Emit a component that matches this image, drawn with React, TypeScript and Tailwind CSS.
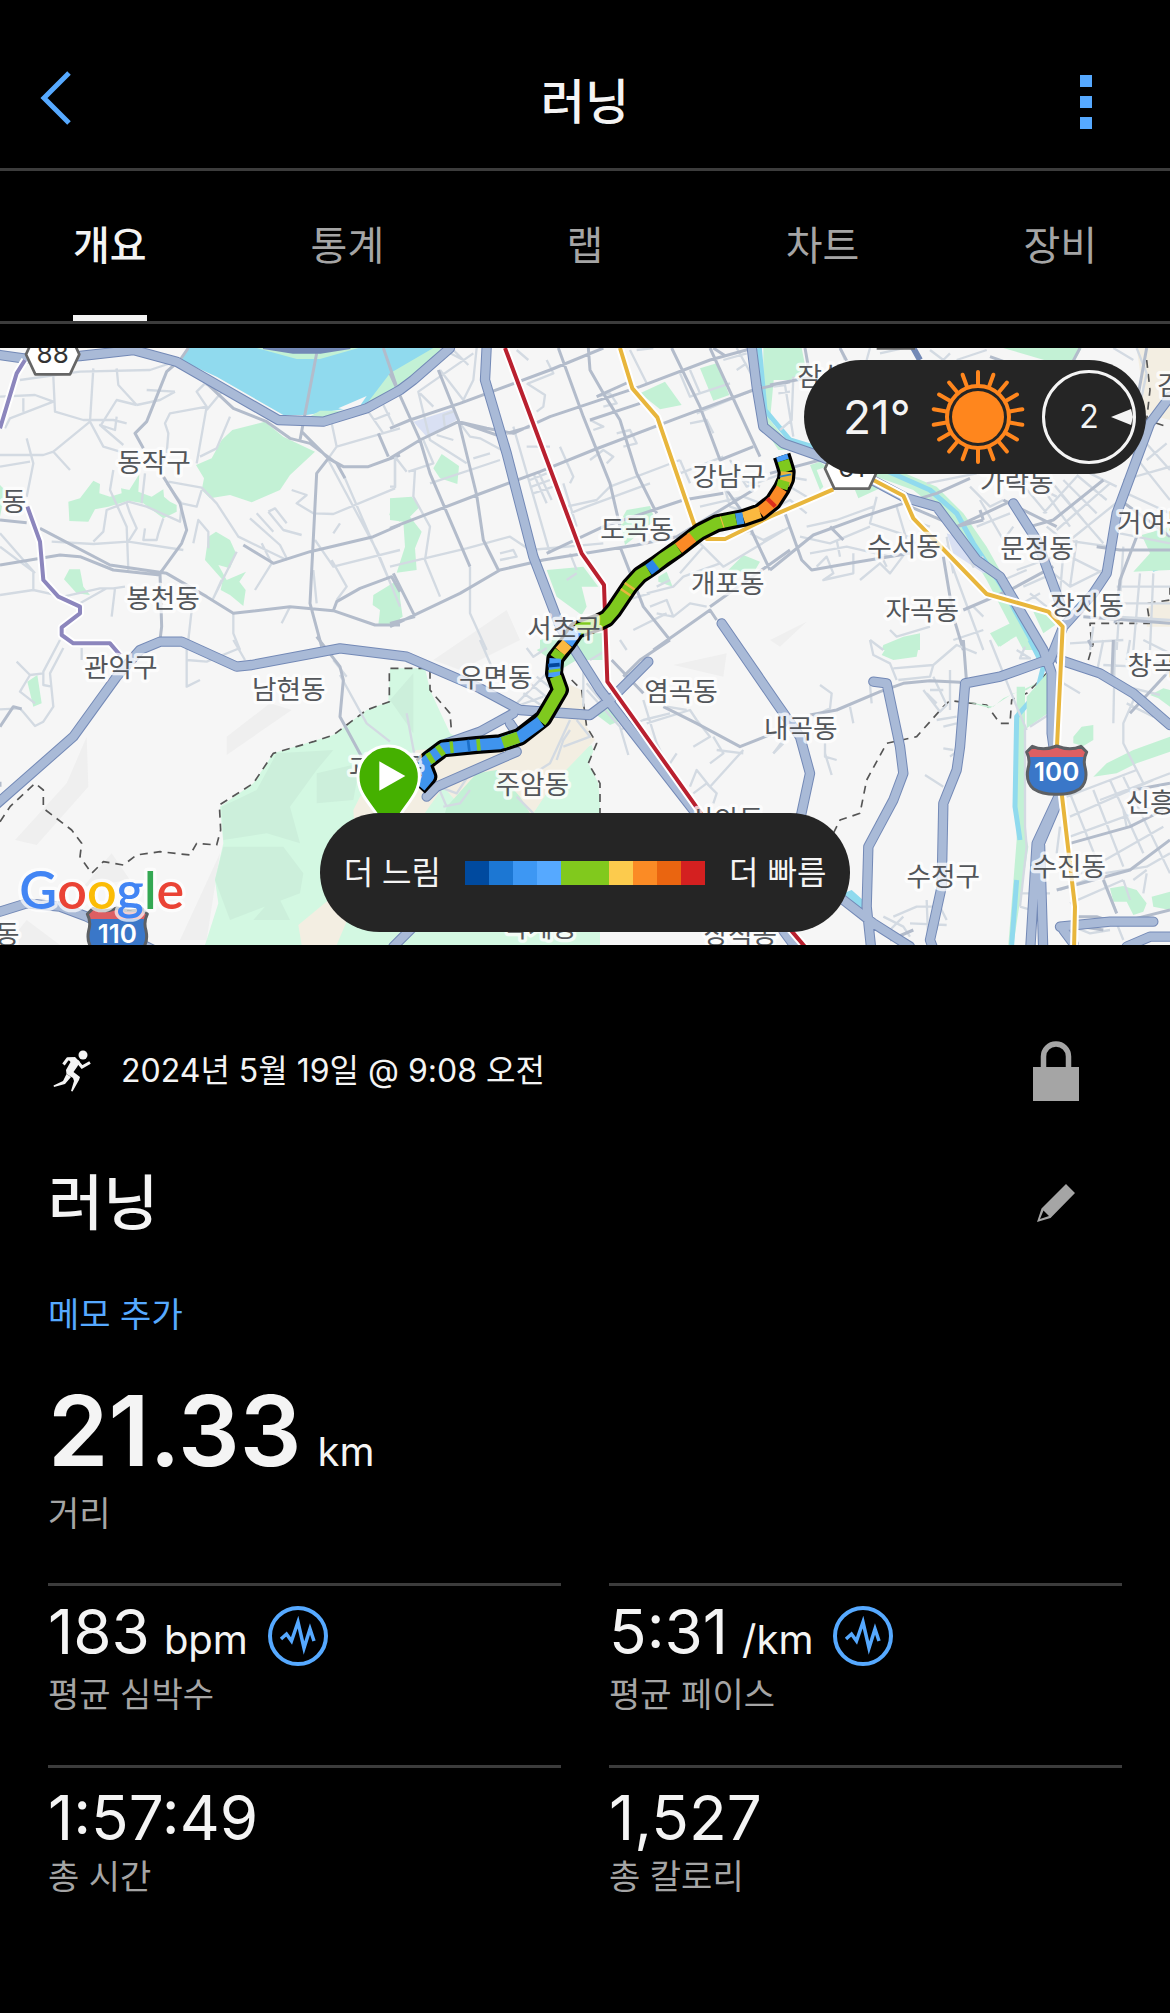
import type { ReactNode } from "react";

// Map units are a third of a pixel. Streets and parks are stored per tile.
type Tile = { x: number; y: number; parks: string[]; small: string; medium: string };

const tiles: Tile[] = [
  {
    x: 0,
    y: 0,
    parks: [
      "M697 270L795 245L850 290L945 335L870 405L840 450L755 487L690 465L630 475L605 450L612 415L588 375L635 355L665 300Z",
      "M205 485L240 475L280 422L300 432L298 460L330 470L365 460L363 445L388 450L418 402L415 455L455 470L490 448L492 470L510 485L530 495L530 515L490 535L430 490L385 482L325 500L285 508L265 545L208 543Z",
      "M625 590L648 575L690 600L708 640L690 685L655 675L680 720L738 695L718 725L737 750L730 798L690 765L662 750L668 720L615 660Z",
      "M192 718L208 688L240 688L250 740L270 765L230 760Z",
      "M1120 765L1180 728L1200 735L1200 850L1135 855L1140 810L1118 795Z",
      "M1180 475L1200 475L1200 545L1168 525Z",
      "M0 435L15 450L0 530Z",
    ],
    small:
      "M60 120L240 95L450 90L540 60M280 85L270 245M160 110L165 215L250 240L340 240L380 250M350 85L355 135L410 195M0 170L105 165L160 185L30 235L15 265M70 175L70 215M270 245L160 335L130 345L0 345M160 335L210 390M80 295L100 370L80 470M0 380L90 365M340 390L330 450L380 560L385 690M590 370L620 200L510 220L495 250L505 280L500 340L480 390M440 150L525 155M410 195L480 180L525 155M690 230L650 325L600 350M505 425L605 443L650 490L715 590L860 660M500 430L545 490L590 500L605 450M280 605L310 575L320 510L385 485L440 500L540 545L545 490M155 605L280 612L385 605L550 630M385 605L410 565L390 520L380 490M435 565L430 600L470 600L475 580L490 535M580 610L595 540L625 575L625 625M435 400L425 490M300 260L350 180L410 195M350 230L345 270L300 255L370 315M270 245L310 320L360 335M620 200L590 155L615 130M610 130L670 150L620 210M875 450L920 465L890 490L940 520L1000 522L1185 445M750 535L840 615L860 655M770 520L820 575M805 515L850 570L905 585M805 515L825 505L860 550M785 610L815 670L765 750M985 360L1135 640L1200 800M1035 415L1180 750M995 250L1010 320L985 355M1010 320L1200 265M1105 215L1150 280M1150 195L1180 255M1120 240L1170 220M1185 345L1185 445M995 660L1040 740L1010 780M1000 580L1020 550M945 600L1000 680L1200 630M0 580L105 700M0 620L100 695L100 750L0 765M100 750L190 770L300 745L340 745L375 740M240 790L320 745M345 745L335 830M575 810L565 900M700 820L700 880L720 930M870 800L845 850M665 720L640 775L710 635M940 690L950 790",
    medium:
      "M950 40L900 300M1150 24L1190 140M565 24L540 60L500 95L440 245L405 280L430 325M490 410L540 490L560 570L545 610L480 700L485 860L480 900M120 565L330 675L500 700L620 770L700 820L870 800L1000 812L1125 855L1200 855M0 675L180 645L240 650L340 690L480 705M0 540L80 548M905 275L985 355L950 400L930 790L965 920M985 355L1030 380L1105 380L1200 345M730 615L820 670L930 635L1120 590L1200 555M620 130L700 205L800 245L870 295L930 310L1010 370L1035 415M1135 280L1165 350M1000 812L1010 785L1080 745L1175 710L1200 755",
  },
  {
    x: 1170,
    y: 0,
    parks: [
      "M750 160L825 125L875 195L810 208Z",
      "M930 85L980 70L1018 165L970 182Z",
      "M130 385L155 342L207 378L202 432L150 415Z",
      "M0 475L65 470L90 500L60 530L95 575L75 625L80 690L20 698L45 620L40 545L0 540Z",
      "M0 735L25 740L38 830L0 855Z",
      "M470 690L580 680L625 740L575 740L590 800L575 825L500 770Z",
      "M690 545L710 510L780 498L795 540L750 580L705 615Z",
      "M1015 690L1060 645L1110 665L1090 700Z",
      "M805 710L830 695L848 740L805 725Z",
      "M450 900L560 870L640 880L640 935L450 930Z",
    ],
    small:
      "M185 25L235 75M260 24L250 120L220 180L150 90M250 40L85 155L120 300L230 370M150 24L220 60M90 160L130 200M0 440L15 440L15 350L50 395M55 395L130 370L100 300M75 390L70 470L120 560L105 660L150 770M0 680L230 625L360 590L420 630L640 610M165 265L160 225L190 215M140 285L190 300M210 250L240 290L270 295L335 330L335 250M300 340L250 355M330 360L120 430M370 260L480 640M410 320L480 320M430 400L470 490M445 395L485 480M420 420L470 400M425 440L480 420M430 460L490 440M510 320L550 410L540 430M410 130L465 165L460 200L440 215M415 130L490 100L470 60M380 30L415 60M600 240L640 260L610 270M530 500L620 480L660 440L870 360M520 430L560 560M540 520L590 500L780 430M600 360L640 330L670 350L650 370M620 170L660 160L680 190L640 200M680 280L720 270L740 310L700 320M740 30L790 24M720 30L770 130M870 360L900 430M900 90L930 160M900 250L950 240L970 280M870 100L900 170L1020 130M920 220L1090 150M840 330L870 400L1000 350M1040 24L1110 150M1000 60L1070 40M1070 70L1040 90M1020 360L1070 440L1180 400M1060 420L1110 440M930 500L1060 470L1140 500M1000 430L1020 500L1080 520M930 610L1000 680L1200 560M770 760L850 740L880 710L990 670M800 740L840 720M780 800L830 780L850 830L800 820M850 830L900 790L950 800M1080 580L1120 600L1180 570M1010 590L1090 570M640 800L780 760M730 870L830 820M540 640L560 690M240 680L240 820L290 930M330 640L370 630L380 650L330 660M530 720L560 700M940 620L870 700",
    medium:
      "M0 100L90 300L120 400L240 680M145 90L205 240L260 465L280 600L325 690M0 265L60 240L210 190L480 90L640 24M0 355L90 300L205 245L290 265L370 280L480 230L750 140L960 60L1090 24M205 245L320 285M0 565L260 465L450 395L610 330L860 235L1090 150L1200 125M350 280L420 260M470 640L640 560L880 480L1000 460M0 860L210 760L330 690L460 660L740 615L860 590L1090 450M505 24L580 230L660 430L690 560M595 24L600 90L640 160L690 240L740 400L800 520M600 240L750 190M845 24L930 200L990 360L1090 320M960 24L1110 350M690 620L760 800L840 900M960 800L1200 630M790 930L960 810L980 840M1010 450L1060 520L1140 690M10 700L75 830M0 850L75 830M730 120L620 170M970 24L1010 50",
  },
  {
    x: 2310,
    y: 0,
    parks: [
      "M0 24L95 24L108 90L60 120L0 120Z",
      "M700 24L935 24L915 62L830 62Z",
      "M120 375L150 365L170 380L140 390L160 440L150 450Z",
      "M255 450L310 420L330 445L265 475Z",
      "M660 880L730 845L745 885L685 920Z",
      "M790 815L850 820L870 845L820 880Z",
      "M340 915L400 890L450 880L450 930L335 930Z",
      "M1115 585L1200 560L1200 690L1090 695L1140 640Z",
    ],
    small:
      "M10 140L45 135L70 290M70 110L65 240L30 270M25 160L60 155M210 24L225 60M300 24L290 60M330 40L400 24M480 30L520 60L540 40M560 60L650 30M20 500L60 480L110 520M60 440L110 470L90 500M50 410L110 420M110 560L200 540L310 500M90 590L180 610L300 560M120 640L230 620L360 650L410 640M140 680L170 650L190 700L160 720L250 700L250 640M270 720L330 670L360 700L405 640M200 600L210 650M320 470L300 550L420 590M380 500L410 600M350 680L330 640M430 600L450 640L530 620M420 540L480 560M530 590L550 700M540 660L640 930M470 430L620 400M480 470L500 500M600 440L660 500L700 480M620 560L720 520M630 480L700 600L730 560M700 420L760 440M730 400L830 520M760 420L860 470M800 420L900 560M840 420L940 540M880 420L980 520M920 405L1010 480M960 400L1040 440M820 520L920 410M860 570L1020 430M900 600L1050 480M870 460L1000 610M830 560L880 600L1020 620L1030 660M740 690L880 640L1000 700M760 740L850 700L900 740L1000 690M880 640L870 760M920 600L900 740M780 760L830 800M740 800L810 760M1060 620L1040 930M1110 700L1090 930M1150 700L1140 930M1040 740L1200 740M1040 790L1200 790M1040 830L1200 840M970 860L960 930M900 910L1060 900M1050 580L1200 610M1080 330L1200 480M1120 300L1200 390M1060 420L1200 380M1130 360L1190 310M1070 460L1200 520M1100 24L1130 100L1100 240M1030 24L1090 60M300 900L340 930M360 870L380 890L480 860M550 900L640 870M610 800L640 830M670 700L700 720L770 690M570 590L610 680L640 650",
    medium:
      "M0 135L130 110M105 24L115 80M210 24L230 62M0 400L150 360M0 690L130 585L280 530L400 490L500 460L600 415M45 520L95 660L125 690L240 670L420 640M180 560L220 600M420 500L560 560L730 480M520 650L550 830L580 930M580 810L720 750L850 680M630 510L640 540M560 560L640 540M1130 24L1100 190M1000 420L850 540L780 560M700 480L860 560M1200 590L1160 560L1050 480M1100 590L1050 720L1035 850M940 830L1200 850M660 50L830 110M930 24L910 62M980 620L1050 630L1200 630",
  },
  {
    x: 0,
    y: 900,
    parks: ["M82 125L112 105L125 190L100 200Z", "M75 500L120 490"],
    small:
      "M50 65L90 105L60 155L105 190M90 105L130 100M180 0L130 95L130 135L155 140M190 24L150 100L160 200L130 245L105 258L60 205L0 208M560 0L560 140L600 120M560 60L620 65L720 24M700 0L735 60M1000 60L1040 110M1020 105L1100 250L1170 305M245 24L245 60",
    medium: "M0 260L40 200L65 207M950 -10L1020 80L1030 120L1020 230L1085 350M0 425L0 440",
  },
  {
    x: 1170,
    y: 900,
    parks: [
      "M440 30L500 0L640 0L640 60L560 60L510 90L470 50Z",
      "M620 225L680 190L695 240L660 255Z",
      "M380 200L440 200L435 225L370 215Z",
      "M170 500L260 400L320 390L390 470L420 520L165 520Z",
    ],
    small:
      "M270 0L305 80M410 24L430 50L470 24M380 190L470 100M400 160L460 200M390 195L460 170M420 130L480 180M440 110L490 150M590 150L690 260L715 345M690 270L760 240L840 220M580 60L580 200M760 180L800 310L870 450L920 540M770 250L900 210L920 240L960 290L910 320M860 340L840 370M900 440L920 390L960 440L1060 330M910 460L950 430L980 460L970 490M980 330L1060 340M970 290L1000 340L960 370M540 240L480 370L440 395M560 240L600 290L520 320M540 270L520 300L500 360M50 220L80 380L60 400M380 470L430 520M120 430L200 460L240 400M160 500L210 490L240 450M690 0L710 30M1150 340L1180 300M590 130L640 190M830 200L890 210M600 60L650 30M140 430L170 500",
    medium: "M665 60L760 160M700 110L750 60L840 0M820 200L920 250L1050 320L1150 280",
  },
  {
    x: 2310,
    y: 900,
    parks: [
      "M335 45L350 20L400 5L450 0L440 50L370 60Z",
      "M680 0L720 0L690 20Z",
      "M770 170L835 95L840 215L770 265Z",
      "M910 290L935 260L970 255L970 300L940 318L910 310Z",
      "M970 410L1010 370L1090 330L1200 290L1200 335L1100 370L1040 400Z",
      "M1140 165L1180 145L1200 150L1200 200L1165 175Z",
      "M1020 745L1060 738L1100 750L1130 790L1120 815L1090 825L1070 785L1030 785Z",
      "M1145 770L1200 755L1200 810L1150 800Z",
      "M590 185L660 205L730 160L770 150L800 130L700 175L670 200Z",
    ],
    small:
      "M300 0L310 45L360 70L380 120M370 85L490 75L560 15L620 40M490 75L480 110L385 120M660 0L740 200L770 270M780 260L850 215M765 265L765 560L770 620L750 800M150 135L185 160L180 205L130 230M240 200L250 250M300 135L305 190M460 150L510 215L530 195L490 110M480 150L520 150M470 160L500 190M500 240L560 230M520 260L560 250M520 325L550 330M540 350L560 335M465 405L520 440M165 310L165 350L200 360M165 340L185 405M10 340L40 310M740 30L780 55L750 55L765 20M880 130L930 160M1000 0L980 100M1035 0L1030 250M1080 0L1070 60M1120 0L1200 40M1000 75L1100 80L1200 60M1030 130L1170 165M1095 170L1060 250L1060 310L1120 430M1150 230L1070 190M900 530L1150 420M890 470L1100 390M900 460L980 660L1040 820M970 450L1060 680M1020 420L1120 640M1060 410L1200 700M900 590L1200 480M900 720L1180 560M1060 510L1070 560M990 480L1200 400M870 750L1000 700L1130 680L1200 640M900 790L1060 720M1060 720L1080 780M1130 700L1120 760M1090 720L1130 690M750 760L840 760M750 800L800 815M370 830L440 800L510 800L530 840M420 850L530 855M470 780L475 910M340 830L400 860L420 890M330 860L430 910M360 870L400 830M510 800L500 870M910 860L960 880L1020 870M1040 850L1060 900M870 560L860 640M800 620L780 740M540 90L540 210",
    medium:
      "M120 225L200 210L330 155L400 130L480 122L570 127M580 0L590 130M955 0L965 20M1030 0L1025 130M1080 220L1200 90M900 610L1080 560L1180 510M860 750L970 720L1080 690L1200 600M1000 720L1040 820M920 830L980 830L1040 850L1200 810M870 850L1000 870M1090 450L1200 430M360 900L430 870",
  },
];

const highways =
  "M0 45L70 55L240 48L400 30L530 65L835 240L970 245L1100 205L1200 150L1240 120L1350 24M-10 1392L220 1190L350 1010L420 930L480 905L545 905L710 980L755 975L1020 925L1220 950L1440 1045L1560 1110L1770 1125L1830 1080L1945 965M1460 20L1455 120L1520 340L1600 650L1680 860L1800 1050L2080 1410L2260 1650L2400 1840M2255 20L2270 140L2290 260L2350 310L2450 345L2560 390L2720 475L2810 500L2930 660L3000 710L3130 930L3155 1000L3155 1180L3180 1360L3110 1510L3090 1840M2165 850L2330 1090L2400 1190L2430 1300L2400 1440M2620 1025L2660 1030L2700 1220L2710 1300L2680 1380L2605 1520L2600 1700L2615 1840M2895 1035L2880 1220L2870 1290L2830 1390L2825 1640L2790 1800L2805 1840M2895 1030L3000 1010L3140 960M3510 170L3450 250L3350 520L3320 700L3280 760L3190 860L3150 960M3180 960L3300 1000L3400 1060L3510 1155M3040 490L3110 600L3180 790M3180 1370L3120 1510L3130 1840M2530 1680L2620 1750L2730 1820M3180 1760L3330 1745L3460 1745M3380 1820L3450 1790L3520 1790M1280 1370L1310 1340L1550 1235M1340 1210L1440 1175L1540 1120M1530 1150L1550 1180L1530 1230M0 1715L80 1690L180 1700L260 1730L460 1830M1180 1820L1260 1740M3190 1770L3220 1810";

const route: [string, string][] = [
  ["#4a9df8", "M2345 347L2350 362"],
  ["#7fc91e", "M2350 362L2360 395"],
  ["#e9b63c", "M2360 395L2358 418L2351 434"],
  ["#2c83c9", "M2356 404L2357 409M2351 428L2349 434"],
  ["#7fc91e", "M2352 422L2345 446"],
  ["#fb8a26", "M2345 446L2320 485L2280 517"],
  ["#dc2d1c", "M2318 483L2309 492"],
  ["#fbb940", "M2280 517L2230 534"],
  ["#3e95e8", "M2230 534L2208 538"],
  ["#7fc91e", "M2208 538L2150 550L2100 575L2072 595"],
  ["#fbb940", "M2165 547L2168 546"],
  ["#fb8a26", "M2078 591L2035 625"],
  ["#7fc91e", "M2035 625L1990 655L1965 675"],
  ["#2c86e6", "M1968 673L1945 690"],
  ["#7fc91e", "M1945 690L1920 705L1890 738L1840 812L1820 835L1800 845L1730 870"],
  ["#e9b63c", "M1891 736L1887 742M1879 754L1875 760"],
  ["#4a9df8", "M1730 870L1702 910"],
  ["#fbb940", "M1702 910L1680 935"],
  ["#7fc91e", "M1680 935L1666 955"],
  ["#4a9df8", "M1666 955L1662 1012"],
  ["#02469b", "M1661 970L1662 981"],
  ["#7fc91e", "M1663 988L1664 996M1666 1010L1680 1050L1630 1135L1622 1145"],
  ["#3f94ee", "M1622 1145L1560 1190L1500 1210L1430 1215L1330 1225L1290 1255L1270 1272L1285 1310L1260 1340"],
  ["#7fc91e", "M1555 1192L1508 1208M1441 1214L1430 1215M1360 1221L1350 1222M1328 1227L1315 1236M1298 1250L1285 1258"],
  ["#1b6fc9", "M1410 1216L1402 1217"],
];

const routeLine =
  "M2345 347L2350 362L2360 395L2358 418L2345 446L2320 485L2280 517L2230 534L2150 550L2100 575L2035 625L1965 675L1920 705L1890 738L1840 812L1820 835L1800 845L1730 870L1702 910L1666 955L1662 1000L1680 1050L1630 1135L1560 1190L1500 1210L1430 1215L1330 1225L1290 1255L1270 1272L1285 1310L1255 1342";

const places: [string, number, number][] = [
  ["동작구", 462, 396],
  ["동", 42, 514],
  ["봉천동", 489, 804],
  ["관악구", 362, 1011],
  ["남현동", 866, 1076],
  ["동", 22, 1812],
  ["강남구", 2187, 438],
  ["도곡동", 1911, 596],
  ["개포동", 2183, 759],
  ["서초구", 1692, 894],
  ["우면동", 1487, 1040],
  ["염곡동", 2043, 1082],
  ["주암동", 1597, 1362],
  ["내곡동", 2402, 1194],
  ["사안동", 2180, 1468],
  ["과천동", 1157, 1312],
  ["막계동", 1621, 1790],
  ["상적동", 2221, 1812],
  ["잠실동", 2503, 139],
  ["가락동", 3050, 456],
  ["거여동", 3461, 576],
  ["수서동", 2712, 649],
  ["문정동", 3111, 654],
  ["자곡동", 2767, 840],
  ["장지동", 3261, 824],
  ["김이동", 3581, 166],
  ["창곡동", 3493, 1004],
  ["신흥동", 3487, 1416],
  ["수진동", 3208, 1608],
  ["수정구", 2830, 1638],
];

const paceColors = [
  "bg-[#004a9f]",
  "bg-[#1c77d3]",
  "bg-[#3d97f3]",
  "bg-[#56a9ff]",
  "bg-[#81c91d]",
  "bg-[#81c91d]",
  "bg-[#fccb4d]",
  "bg-[#fb8b25]",
  "bg-[#ea6510]",
  "bg-[#d42020]",
];

const tabs = ["개요", "통계", "랩", "차트", "장비"];

const stats = [
  { value: "183", unit: "bpm", label: "평균 심박수", chart: true },
  { value: "5:31", unit: "/km", label: "평균 페이스", chart: true },
  { value: "1:57:49", unit: "", label: "총 시간", chart: false },
  { value: "1,527", unit: "", label: "총 칼로리", chart: false },
];

function Shield({ x, y, label }: { x: number; y: number; label: string }) {
  const outline = "M8 22L25 5Q58 20 98 4Q138 20 171 5L188 22Q176 45 184 72Q192 110 168 132Q140 150 98 149Q56 150 28 132Q4 110 12 72Q20 45 8 22Z";
  return (
    <g transform={`translate(${x} ${y})`}>
      <path d={outline} fill="#3a77c8" />
      <path d="M8 22L25 5Q58 20 98 4Q138 20 171 5L188 22L180 37H16Z" fill="#dd5f63" />
      <path d={outline} fill="none" stroke="#5d6064" strokeWidth="9" />
      <text x="98" y="110" textAnchor="middle" fill="#fff" fontSize="78" fontWeight="600">
        {label}
      </text>
    </g>
  );
}

function RouteBadge({ x, y, label }: { x: number; y: number; label: string }) {
  return (
    <g transform={`translate(${x} ${y})`}>
      <path d="M28 -60H132L160 0L132 60H28L0 0Z" fill="#fff" stroke="#666" strokeWidth="8" strokeLinejoin="round" />
      <text x="80" y="26" textAnchor="middle" fill="#333" fontSize="78">
        {label}
      </text>
    </g>
  );
}

function CourseMap() {
  return (
    <svg
      viewBox="0 24 3510 1791"
      className="block w-full"
      role="img"
      aria-label="러닝 코스 지도"
      fill="none"
      strokeLinejoin="round"
      fontFamily="Inter, 'Noto Sans CJK KR', sans-serif"
    >
      <rect y="24" width="3510" height="1791" fill="#f6f6f6" />

      {/* Hills */}
      <path
        fill="#efefef"
        d="M260 1190L265 1340L110 1515L45 1500L200 1330ZM680 1190L810 1090L875 1110L680 1245ZM335 1540L390 1620L250 1640ZM660 1540L620 1800L540 1800ZM1300 960L1520 810L1560 900L1380 990ZM2020 975L2180 940L2170 1010ZM2310 900L2420 845L2340 920ZM80 1740L20 1815H180Z"
      />

      {/* Forest */}
      <path
        fill="#d3f8e2"
        d="M1170 985H1275L1290 1050L1350 1180L1480 1260L1600 1290L1775 1215L1800 1300V1815H615L655 1690L645 1620L670 1510L660 1400L760 1330L820 1240L1000 1185L1100 1110L1165 1085Z"
      />
      <path
        fill="#ccefdb"
        d="M670 1500L665 1400L770 1350L830 1240L1000 1230L950 1290L870 1400L900 1510L800 1480ZM670 1520L850 1520L910 1600L900 1660L690 1740L645 1620ZM950 1300L1080 1270L1060 1380L950 1390ZM1170 1080L1240 1000V1180ZM760 1740L830 1660L870 1740Z"
      />
      <path
        fill="#f6f6f6"
        d="M1715 1010L1860 1000V1460H1805L1795 1330L1765 1270L1790 1210L1760 1160Z"
      />
      <path
        fill="#f3eee2"
        d="M1250 1230L1500 1215L1620 1140L1700 1030L1745 1050L1760 1160L1785 1200L1660 1330L1600 1420H1400L1330 1340L1260 1440L1080 1650L1010 1815H905L895 1755L1010 1660L1070 1560L1060 1410L1080 1370ZM3410 24H3510V240L3430 220L3425 130ZM3445 800L3510 780V860H3440Z"
      />
      <path
        d="M0 1445L30 1400L105 1330L130 1350V1405L215 1470L245 1510L240 1550L275 1600L310 1565L370 1575L410 1545L480 1535L570 1545L590 1510L650 1515L662 1470L658 1395L760 1330L820 1240L940 1205L1000 1185L1100 1110L1168 1085V985L1290 985V1050L1350 1120L1355 1180M1715 1020L1745 1050L1760 1160L1790 1210L1765 1270L1800 1330V1420M2500 1480L2520 1440L2580 1420L2600 1320L2660 1210L2750 1190L2830 1100L2850 1082L2960 1095L3000 1150H3030L3035 1080L3080 1060L3140 1000M3265 960L3280 910M3440 60L3450 150L3440 240L3500 260M3510 740V780L3440 790L3450 850H3270L3275 920"
        stroke="#555"
        strokeWidth="5"
        strokeDasharray="24 18"
      />

      {/* Water */}
      <path fill="#90daee" d="M565 24H1330L1230 105L1080 200L1000 212L920 225H850L650 110L540 60Z" />
      <path
        fill="#c3f1d5"
        d="M770 24L890 57H960L1075 24ZM1350 24H1300L1170 100L1090 205L1200 165L1290 95ZM920 235L960 212L1030 212L1050 222L960 245ZM2290 24H2330L2310 240L2350 290L2410 330H2335L2290 260ZM2620 360L2810 440L2890 520L2960 620L3050 780L3130 930H3070L2960 720L2850 540L2740 450L2600 400ZM3050 1040H3075V1480L3085 1520L3040 1815H3025L3050 1500Z"
      />
      <path fill="#f6f6f6" d="M1015 205L1100 168L1075 205L1040 210Z" />
      <path
        stroke="#90daee"
        strokeWidth="15"
        d="M2278 24L2295 210L2370 300L2470 330L2620 375L2790 450L2870 520L2920 610L3000 730L3110 930M3130 980L3110 1060L3050 1130L3045 1400L3060 1500M3050 1620L3035 1815M3090 900L3120 960"
      />
      <path fill="#90daee" d="M2530 1660L2555 1650L2600 1690V1725ZM3440 670L3500 682L3460 695Z" />
      <path fill="#d9e0f3" d="M1240 245L1360 207L1370 240L1280 290ZM2840 580L2900 600L2970 690L2950 700L2860 640Z" />

      {/* Parks and streets */}
      {tiles.map((t, i) => (
        <g key={i} transform={`translate(${t.x} ${t.y})`}>
          <path d={t.parks.join("")} fill="#c3f1d5" />
        </g>
      ))}
      {tiles.map((t, i) => (
        <g key={i} transform={`translate(${t.x} ${t.y})`}>
          <path d={t.small} stroke="#d3dae2" strokeWidth="7" />
          <path d={t.medium} stroke="#b3bccb" strokeWidth="9" />
        </g>
      ))}

      {/* Highways */}
      <path d="M790 18L880 32H960L1050 18M2740 24L2760 60" stroke="#7389b6" strokeWidth="18" />
      <path d={highways} stroke="#7389b6" strokeWidth="31" strokeLinecap="round" />
      <path d={highways} stroke="#a9bad7" strokeWidth="25" strokeLinecap="round" />

      {/* Subway and toll lines */}
      {[
        ["#8c86bd", "M75 60L50 100L0 265M82 500L120 605L130 720L175 770L240 800V820L185 862V885L220 910H330L360 945"],
        ["#b9202f", "M1515 24L1745 640L1812 735L1822 1025L2110 1430M2330 1720L2440 1850"],
        ["#e8b63c", "M1860 24L1897 145L1972 232L2090 575L2120 597H2175L2310 530L2500 448M2620 420L2710 467L2740 535L2960 762L3145 815L3188 860L3170 1240M3185 1360L3225 1700L3222 1830"],
      ].map(([color, d]) => (
        <g key={color}>
          <path d={d} stroke="#fff" strokeWidth="24" />
          <path d={d} stroke={color} strokeWidth="12" />
        </g>
      ))}

      {/* Recorded route */}
      <path d={routeLine} stroke="#000" strokeWidth="54" />
      {route.map(([color, d]) => (
        <path key={d} d={d} stroke={color} strokeWidth="35" />
      ))}

      {places.map(([name, x, y]) => (
        <text
          key={`${name}${x}`}
          x={x}
          y={y}
          textAnchor="middle"
          fontSize="80"
          fill="#53565a"
          stroke="#fff"
          strokeOpacity="0.75"
          strokeWidth="20"
          paintOrder="stroke"
        >
          {name}
        </text>
      ))}

      <RouteBadge x={78} y={43} label="88" />
      <RouteBadge x={2475} y={386} label="61" />
      <path d="M2630 24H2745" stroke="#666" strokeWidth="10" />
      <Shield x={3072} y={1214} label="100" />
      <Shield x={254} y={1700} label="110" />

      {/* Start pin */}
      <path
        d="M1165 1218C1216 1218 1258 1258 1258 1310C1258 1365 1214 1395 1189 1445H1144C1116 1395 1074 1365 1074 1310C1074 1258 1114 1218 1165 1218Z"
        fill="#45b000"
        stroke="#fff"
        strokeWidth="9"
      />
      <path d="M1138 1264L1216 1308L1138 1352Z" fill="#fff" />

      <text
        x="58"
        y="1706"
        fontFamily="Lato, sans-serif"
        fontSize="156"
        fontWeight="600"
        stroke="#fff"
        strokeOpacity="0.7"
        strokeWidth="20"
        paintOrder="stroke"
      >
        <tspan fill="#4285f4">G</tspan>
        <tspan fill="#ea4335">o</tspan>
        <tspan fill="#fbbc05">o</tspan>
        <tspan fill="#4285f4">g</tspan>
        <tspan fill="#34a853">l</tspan>
        <tspan fill="#ea4335">e</tspan>
      </text>
    </svg>
  );
}

function Sun() {
  return (
    <svg viewBox="-47 -47 94 94" className="size-[94px]" role="img" aria-label="맑음">
      <circle r="26" fill="#ff861d" />
      <circle r="31" fill="none" stroke="#ff861d" strokeWidth="4" />
      {Array.from({ length: 18 }, (_, i) => (
        <path key={i} d="M0 -32V-45" stroke="#ff861d" strokeWidth="4" strokeLinecap="round" transform={`rotate(${i * 20})`} />
      ))}
    </svg>
  );
}

function Wind() {
  return (
    <div className="relative flex size-[94px] items-center justify-center rounded-full border-3 border-[#f4f4f4] text-[32px]">
      2
      <svg viewBox="0 0 22 16" className="absolute right-0 h-4 w-[22px]" aria-hidden="true">
        <path d="M0 8L20 0L22 8L20 16Z" fill="#f4f4f4" />
      </svg>
    </div>
  );
}

function Runner() {
  return (
    <svg viewBox="0 0 40 42" className="h-[42px] w-10" fill="none" stroke="#f4f4f4" aria-hidden="true">
      <circle cx="30" cy="5" r="4.5" fill="#f4f4f4" stroke="none" />
      <path d="M10.500 14.500L14.500 9L20 9" strokeWidth="3" />
      <path d="M14 7.500L22 7L27 12L24 17L20.500 22L27 27L26 30L19.500 41.500L18 41L21 31L20 28L13.500 24L13 20L17.500 12Z" fill="#f4f4f4" stroke="none" />
      <path d="M13.500 24L18 27L12 34L1 37L0.500 35.500L10 31Z" fill="#f4f4f4" stroke="none" />
      <path d="M24 11L29 17L37 12.500" strokeWidth="3" />
    </svg>
  );
}

function IconButton({ label, children }: { label: string; children: ReactNode }) {
  return (
    <button type="button" aria-label={label} className="flex size-[60px] items-center justify-center">
      {children}
    </button>
  );
}

export default function App() {
  return (
    <main className="min-h-screen bg-black pb-20 font-[Inter,'Noto_Sans_CJK_KR',sans-serif] text-[#f4f4f4]">
      <header className="grid grid-cols-[1fr_auto_1fr] items-center border-b-3 border-[#3c3c3c] px-[26px] pt-[66px] pb-[30px]">
        <button type="button" aria-label="뒤로" className="flex h-[72px] w-[60px] items-start justify-center pt-[5px]">
          <svg viewBox="0 0 32 54" className="h-[54px] w-8" fill="none">
            <path d="M29 2L4 27L29 52" stroke="#56a9ff" strokeWidth="5" />
          </svg>
        </button>
        <h1 className="text-[48px] leading-[72px] font-medium">러닝</h1>
        <button
          type="button"
          aria-label="더 보기"
          className="flex h-[72px] w-[116px] flex-col items-center justify-center gap-[9px] justify-self-end"
        >
          <span className="size-3 bg-[#56a9ff]" />
          <span className="size-3 bg-[#56a9ff]" />
          <span className="size-3 bg-[#56a9ff]" />
        </button>
      </header>

      <nav className="overflow-hidden border-b-3 border-[#3c3c3c]">
        <div role="tablist" className="-mx-[9px] grid grid-cols-5">
          {tabs.map((tab, i) => (
            <button
              key={tab}
              type="button"
              role="tab"
              aria-selected={i === 0}
              className={`mx-auto border-b-6 pt-[45px] pb-[39px] text-[40px] leading-[60px] ${
                i === 0 ? "border-[#f4f4f4] font-medium" : "border-transparent text-[#a5a5a5]"
              }`}
            >
              {tab}
            </button>
          ))}
        </div>
      </nav>

      <section className="relative mt-6">
        <CourseMap />
        <div className="absolute top-3 right-6 flex h-[114px] items-center rounded-[57px] bg-[#252525] pr-[10px] pl-[39px]">
          <span className="w-[88px] text-[46px]">21°</span>
          <Sun />
          <div className="ml-[17px]">
            <Wind />
          </div>
        </div>
        <div className="absolute inset-x-0 bottom-[13px] mx-auto flex h-[119px] w-fit items-center gap-6 rounded-[60px] bg-[#252525] px-6 text-[32px] whitespace-nowrap">
          <span>더 느림</span>
          <div className="flex">
            {paceColors.map((color, i) => (
              <span key={i} className={`size-6 ${color}`} />
            ))}
          </div>
          <span>더 빠름</span>
        </div>
      </section>

      <section className="px-12">
        <div className="flex items-center justify-between pt-24 pr-9">
          <div className="flex items-center gap-7 pl-[5px]">
            <Runner />
            <p className="text-[32px] leading-[60px]">2024년 5월 19일 @ 9:08 오전</p>
          </div>
          <IconButton label="공개 설정">
            <svg viewBox="0 0 46 60" className="h-[60px] w-[46px]">
              <path d="M0 26H46V60H0Z" fill="#a5a5a5" />
              <path d="M10.500 28V15.500A12.500 12.500 0 0 1 35.500 15.500V28" fill="none" stroke="#a5a5a5" strokeWidth="5.500" />
            </svg>
          </IconButton>
        </div>

        <div className="mt-[58px] flex items-center justify-between pr-9">
          <h2 className="text-[60px] leading-[88px] font-medium">러닝</h2>
          <IconButton label="이름 편집">
            <svg viewBox="0 0 38 38" className="size-[38px]" fill="#a5a5a5">
              <path fillRule="evenodd" d="M29 0L38 9L13.500 34L0 38L4.500 24.500ZM6.500 26.500L3 35L12 32Z" />
            </svg>
          </IconButton>
        </div>

        <a href="#memo" className="mt-10 inline-block text-[34px] leading-[56px] text-[#56a9ff]">
          메모 추가
        </a>

        <div className="mt-[50px]">
          <p className="flex items-baseline gap-4 leading-[76px]">
            <span className="text-[97px] font-semibold">21.33</span>
            <span className="text-[40px]">km</span>
          </p>
          <p className="text-[34px] leading-[48px] text-[#a5a5a5]">거리</p>
        </div>

        <div className="mt-[45px] grid grid-cols-2 gap-x-12">
          {stats.map((stat) => (
            <div key={stat.label} className="border-t-3 border-[#3c3c3c] pt-5 pb-[46px]">
              <div className="flex h-[60px] items-center gap-5">
                <p className="flex items-baseline gap-[14px] leading-[60px]">
                  <span className="text-[62px]">{stat.value}</span>
                  {stat.unit && <span className="text-[40px]">{stat.unit}</span>}
                </p>
                {stat.chart && (
                  <IconButton label={`${stat.label} 차트`}>
                    <svg viewBox="0 0 60 60" className="size-[60px]" fill="none" stroke="#56a9ff">
                      <circle cx="30" cy="30" r="28" strokeWidth="4" />
                      <path d="M13 33L18.500 28L23.500 35L30 16L36 42L42 23L46 35" strokeWidth="3.500" />
                    </svg>
                  </IconButton>
                )}
              </div>
              <p className="mt-[5px] text-[34px] leading-[48px] text-[#a5a5a5]">{stat.label}</p>
            </div>
          ))}
        </div>
      </section>
    </main>
  );
}
